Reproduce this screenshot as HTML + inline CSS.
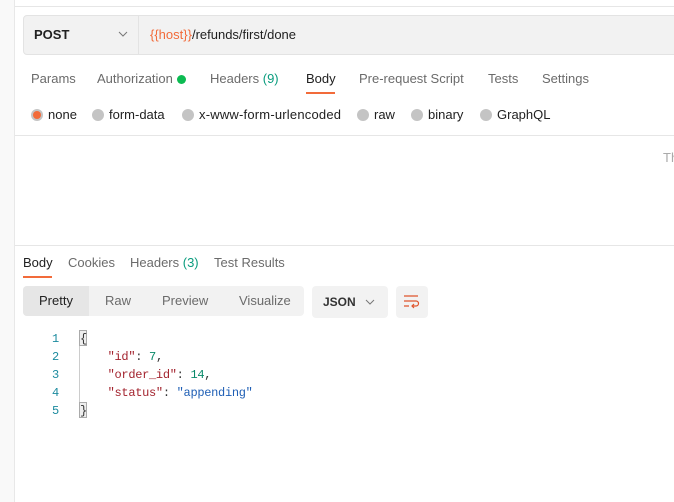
<!DOCTYPE html>
<html><head><style>
body{margin:0;width:674px;height:502px;background:#fff;font-family:"Liberation Sans",sans-serif;position:relative;overflow:hidden;font-size:13px;color:#212121}
.a{position:absolute;white-space:nowrap}
.g{color:#6b6b6b}
.dot{position:absolute;width:12px;height:12px;border-radius:50%;background:#c4c4c4}
.mono{font-family:"Liberation Mono",monospace;font-size:12px}
</style></head><body>
<div class="a" style="left:0;top:0;width:14px;height:502px;background:#f9f9f9;border-right:1px solid #e8e8e8"></div>
<div class="a" style="left:15px;top:6px;width:659px;height:1px;background:#e6e6e6"></div>
<div class="a" style="left:23px;top:15px;width:660px;height:38px;background:#f2f2f2;border:1px solid #e3e3e3;border-radius:4px"></div>
<div class="a" style="left:138px;top:16px;width:1px;height:38px;background:#e3e3e3"></div>
<div class="a" style="left:34px;top:27px;font-weight:bold;font-size:13px">POST</div>
<svg class="a" style="left:118px;top:31px" width="10" height="6"><path d="M1 1L5 5L9 1" stroke="#777" fill="none"/></svg>
<div class="a" style="left:150px;top:27px"><span style="color:#f26b3a">{{host}}</span>/refunds/first/done</div>

<div class="a g" style="left:31px;top:71px">Params</div>
<div class="a g" style="left:97px;top:71px">Authorization</div>
<div class="dot" style="left:177px;top:75px;width:9px;height:9px;background:#0cbb52"></div>
<div class="a g" style="left:210px;top:71px">Headers <span style="color:#0a9c7e">(9)</span></div>
<div class="a" style="left:306px;top:71px">Body</div>
<div class="a" style="left:306px;top:92px;width:29px;height:2px;background:#f26b3a"></div>
<div class="a g" style="left:359px;top:71px">Pre-request Script</div>
<div class="a g" style="left:488px;top:71px">Tests</div>
<div class="a g" style="left:542px;top:71px">Settings</div>

<div class="dot" style="left:31px;top:109px;background:#c4c4c4"></div>
<div class="dot" style="left:33px;top:111px;width:8px;height:8px;background:#f26b3a"></div>
<div class="a" style="left:48px;top:107px">none</div>
<div class="dot" style="left:92px;top:109px"></div><div class="a" style="left:109px;top:107px">form-data</div>
<div class="dot" style="left:182px;top:109px"></div><div class="a" style="left:199px;top:107px;letter-spacing:0.2px">x-www-form-urlencoded</div>
<div class="dot" style="left:357px;top:109px"></div><div class="a" style="left:374px;top:107px">raw</div>
<div class="dot" style="left:411px;top:109px"></div><div class="a" style="left:428px;top:107px">binary</div>
<div class="dot" style="left:480px;top:109px"></div><div class="a" style="left:497px;top:107px">GraphQL</div>
<div class="a" style="left:15px;top:135px;width:659px;height:1px;background:#e6e6e6"></div>
<div class="a" style="left:663px;top:150px;color:#aaa">Th</div>
<div class="a" style="left:15px;top:245px;width:659px;height:1px;background:#e6e6e6"></div>

<div class="a" style="left:23px;top:255px">Body</div>
<div class="a" style="left:23px;top:276px;width:29px;height:2px;background:#f26b3a"></div>
<div class="a g" style="left:68px;top:255px">Cookies</div>
<div class="a g" style="left:130px;top:255px">Headers <span style="color:#0a9c7e">(3)</span></div>
<div class="a g" style="left:214px;top:255px">Test Results</div>

<div class="a" style="left:23px;top:286px;width:281px;height:30px;background:#f2f2f2;border-radius:4px"></div>
<div class="a" style="left:23px;top:286px;width:66px;height:30px;background:#e6e6e6;border-radius:4px 0 0 4px"></div>
<div class="a" style="left:39px;top:293px">Pretty</div>
<div class="a g" style="left:105px;top:293px">Raw</div>
<div class="a g" style="left:162px;top:293px">Preview</div>
<div class="a g" style="left:239px;top:293px">Visualize</div>
<div class="a" style="left:312px;top:286px;width:76px;height:32px;background:#f2f2f2;border-radius:4px"></div>
<div class="a" style="left:323px;top:295px;font-weight:bold;font-size:12px;color:#333">JSON</div>
<svg class="a" style="left:365px;top:299px" width="10" height="6"><path d="M1 1L5 5L9 1" stroke="#777" fill="none"/></svg>
<div class="a" style="left:396px;top:286px;width:32px;height:32px;background:#f2f2f2;border-radius:4px"></div>
<svg class="a" style="left:403px;top:294px" width="18" height="16"><path d="M1 2H15M1 7H13a2.5 2.5 0 0 1 0 5H9M11 10L9 12L11 14M1 12H6" stroke="#e0542c" stroke-width="1.2" fill="none"/></svg>

<div class="a" style="left:79px;top:343px;width:1px;height:60px;background:#ccc"></div>
<div class="a mono" style="left:52px;top:330px;color:#1b8a9e;line-height:18px">1<br>2<br>3<br>4<br>5</div>
<div class="a" style="left:79px;top:330px;width:6px;height:14px;border:1px solid #aaa;background:#eee"></div>
<div class="a" style="left:79px;top:402px;width:6px;height:14px;border:1px solid #aaa;background:#eee"></div>
<div class="a mono" style="left:80px;top:330px;line-height:18px;color:#333;letter-spacing:-0.3px">{<br>&nbsp;&nbsp;&nbsp;&nbsp;<span style="color:#a3232e">"id"</span>: <span style="color:#0a8a6a">7</span>,<br>&nbsp;&nbsp;&nbsp;&nbsp;<span style="color:#a3232e">"order_id"</span>: <span style="color:#0a8a6a">14</span>,<br>&nbsp;&nbsp;&nbsp;&nbsp;<span style="color:#a3232e">"status"</span>: <span style="color:#1f5fb5">"appending"</span><br>}</div>
</body></html>
